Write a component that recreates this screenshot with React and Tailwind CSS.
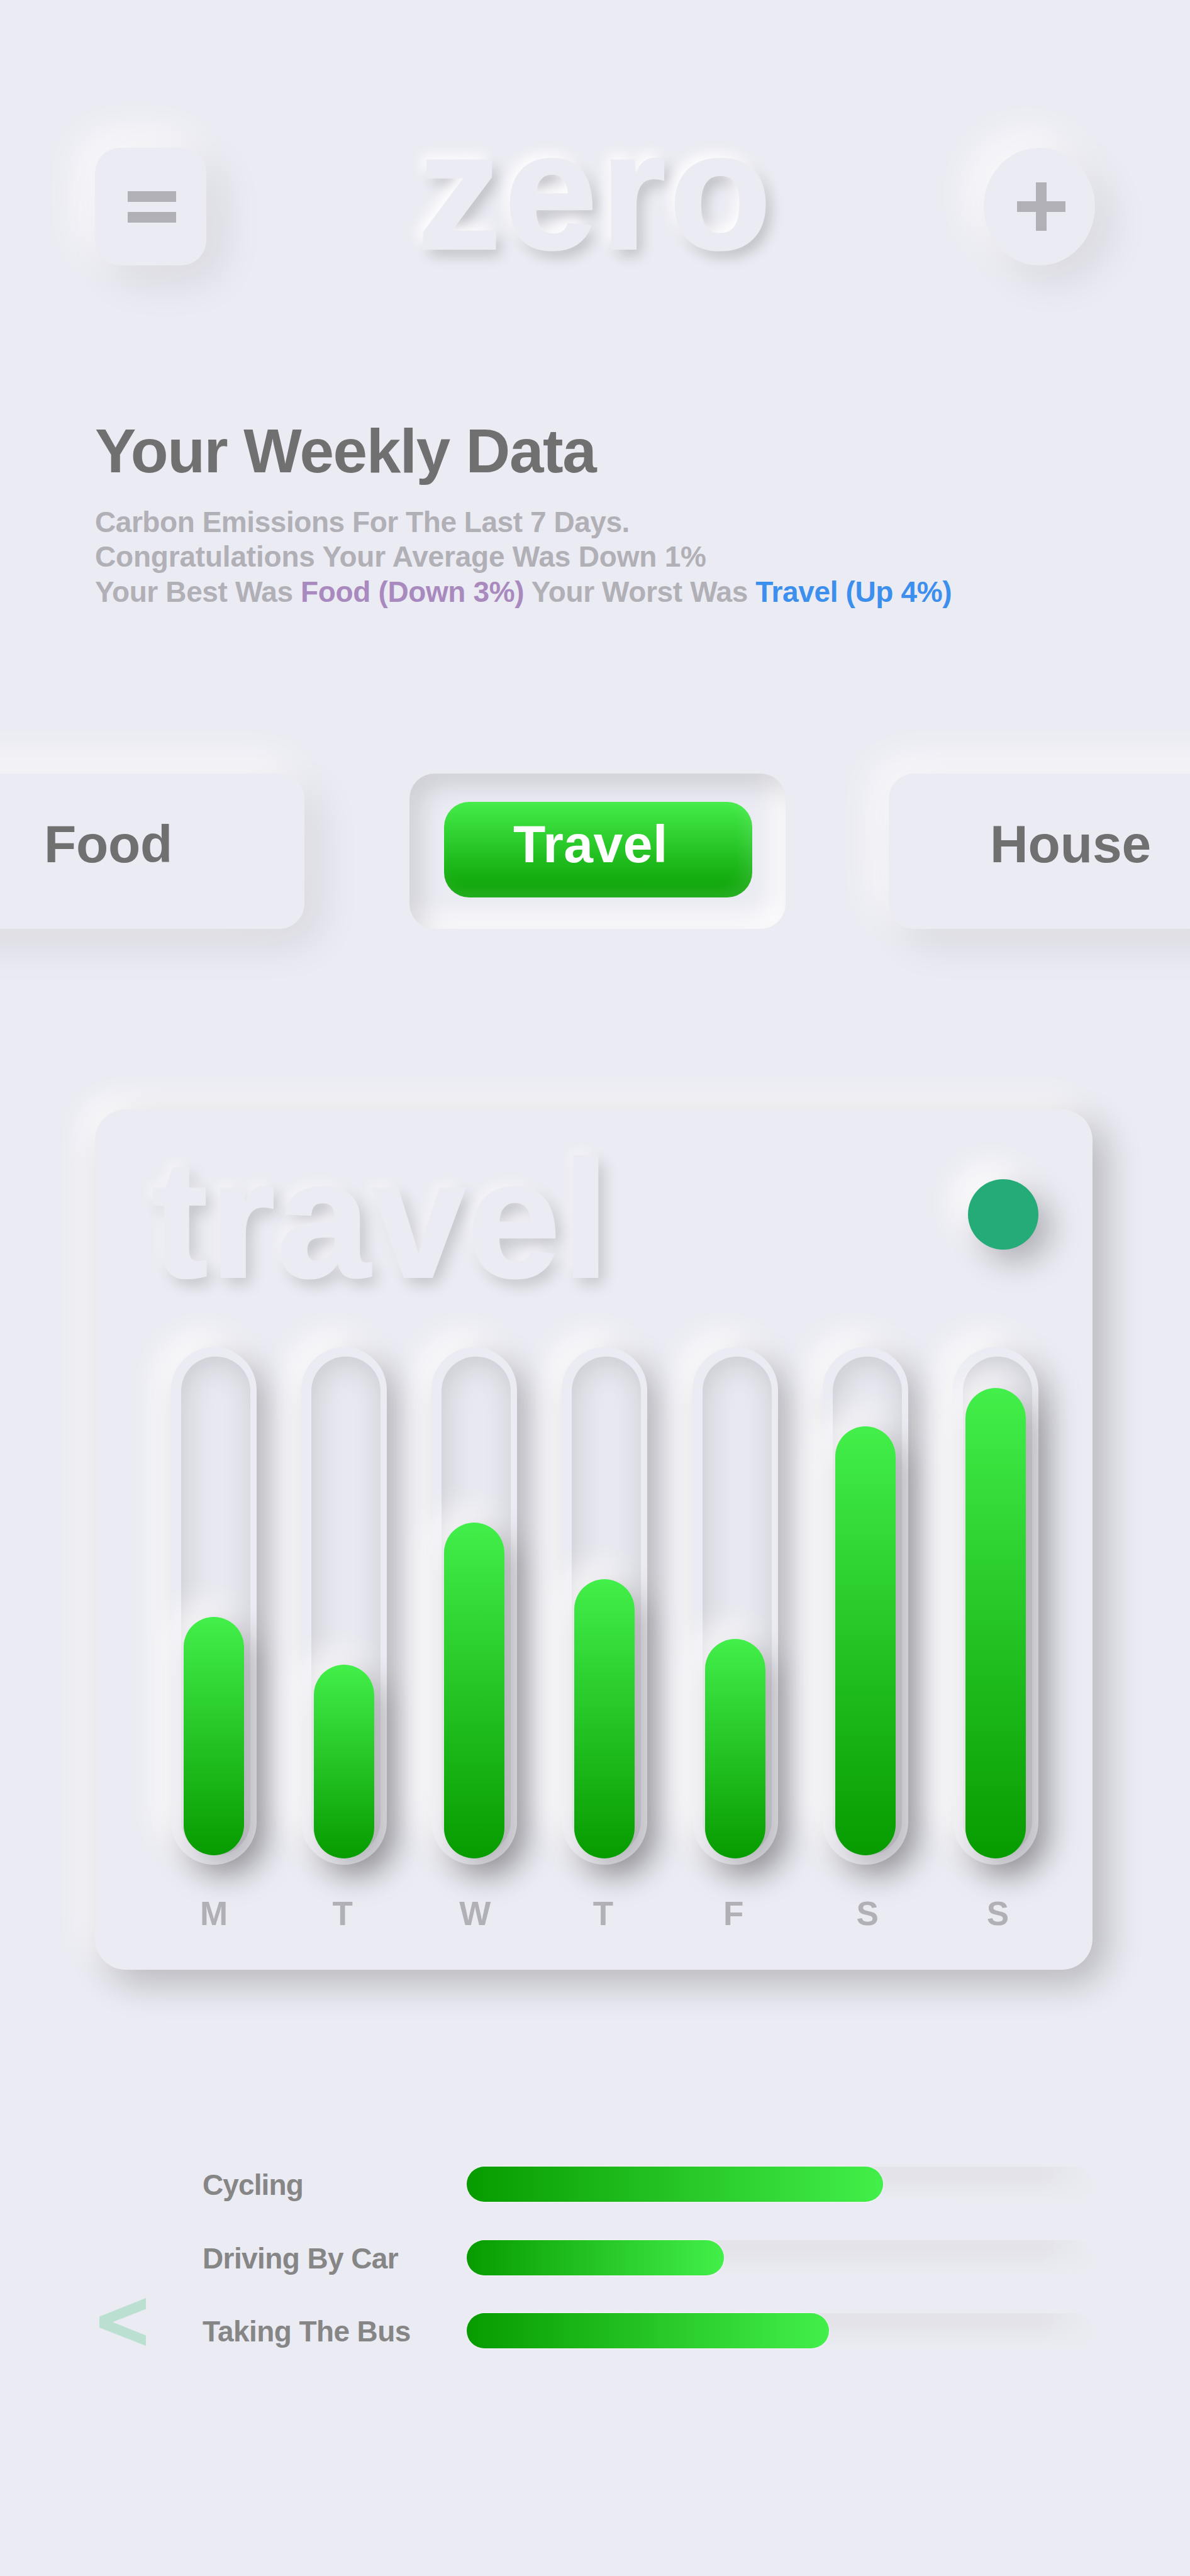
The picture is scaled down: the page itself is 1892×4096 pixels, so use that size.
import React from "react";

const days = [
  { label: "M", height: "h-[379px]", lift: "mb-0", shift: "pl-0" },
  { label: "T", height: "h-[308px]", lift: "-mb-[5px]", shift: "pr-[5px]" },
  { label: "W", height: "h-[534px]", lift: "-mb-[5px]", shift: "pl-[2px]" },
  { label: "T", height: "h-[444px]", lift: "-mb-[5px]", shift: "pr-[5px]" },
  { label: "F", height: "h-[349px]", lift: "-mb-[5px]", shift: "pr-[5px]" },
  { label: "S", height: "h-[682px]", lift: "mb-0", shift: "pl-[7px]" },
  { label: "S", height: "h-[748px]", lift: "-mb-[5px]", shift: "pl-[7px]" },
];

const modes = [
  { label: "Cycling", width: "w-[662px]", tracking: "tracking-[-0.89px]" },
  { label: "Driving By Car", width: "w-[409px]", tracking: "tracking-[-0.6px]" },
  { label: "Taking The Bus", width: "w-[576px]", tracking: "tracking-[-0.6px]" },
];

function Header() {
  return (
    <header className="flex h-[187px] items-start px-[151px]">
      <button
        aria-label="Menu"
        className="flex h-[187px] w-[177px] shrink-0 flex-col items-center gap-[16px] rounded-[40px] bg-[#ebebf3] pt-[69px] pl-[4px] shadow-[24px_24px_68px_rgba(0,0,0,0.09),-20px_-20px_64px_rgba(255,255,255,0.85)]"
      >
        <span className="h-[17px] w-[77px] bg-[#b1b0b6]" />
        <span className="h-[17px] w-[77px] bg-[#b1b0b6]" />
      </button>
      <h1 className="-mt-[65px] ml-[336px] text-[264px] leading-[268px] font-bold tracking-[6.3px] text-[#ebebf3] [-webkit-text-stroke:4px_#ebebf3] [text-shadow:-8px_-9px_20px_rgba(255,255,255,1),9px_11px_22px_rgba(0,0,0,0.2)]">
        zero
      </h1>
      <button
        aria-label="Add"
        className="ml-auto grid h-[187px] w-[177px] shrink-0 place-items-center rounded-[50%] bg-[#ebebf3] shadow-[24px_24px_68px_rgba(0,0,0,0.09),-20px_-20px_64px_rgba(255,255,255,0.85)]"
      >
        <svg className="ml-[5px] h-[77px] w-[77px]" viewBox="0 0 77 77" fill="#b1b0b6">
          <rect x="0" y="30" width="77" height="17" />
          <rect x="30" y="0" width="17" height="77" />
        </svg>
      </button>
    </header>
  );
}

function Summary() {
  return (
    <section className="mt-[246px] pl-[151px]">
      <h2 className="text-[98px] leading-[99px] font-bold tracking-[-1.4px] text-[#707070]">Your Weekly Data</h2>
      <div className="mt-[36px] text-[46px] leading-[55.4px] font-bold whitespace-nowrap text-[#b1b0b6]">
        <p className="tracking-[-0.45px]">Carbon Emissions For The Last 7 Days.</p>
        <p className="tracking-[-0.2px]">Congratulations Your Average Was Down 1%</p>
        <p className="tracking-[-0.37px]">
          Your Best Was <span className="text-[#a98abf]">Food (Down 3%)</span> Your Worst Was{" "}
          <span className="text-[#3c8fec]">Travel (Up 4%)</span>
        </p>
      </div>
    </section>
  );
}

function Categories() {
  return (
    <nav className="mt-[261px] -ml-[116px] flex h-[247px] w-[2124px] text-[84px] leading-[84px] font-bold">
      <div className="h-[247px] w-[600px] shrink-0 rounded-[40px] bg-[#ebebf3] pt-[70px] pl-[186px] tracking-[-0.28px] text-[#707070] shadow-[24px_24px_68px_rgba(0,0,0,0.09),-20px_-20px_64px_rgba(255,255,255,0.8)]">
        Food
      </div>
      <div className="ml-[167px] h-[247px] w-[598px] shrink-0 rounded-[40px] bg-[#ebebf3] pt-[45px] pl-[55px] shadow-[inset_16px_18px_40px_rgba(0,0,0,0.13),inset_-18px_-18px_36px_rgba(255,255,255,0.95)]">
        <div className="h-[152px] w-[490px] rounded-[40px] bg-[linear-gradient(to_bottom,#44ec49,#10a70b_88%,#10a70b)] pt-[25px] pl-[110px] tracking-[0.5px] text-white shadow-[inset_-10px_-10px_24px_rgba(255,255,255,0.11)]">
          Travel
        </div>
      </div>
      <div className="ml-[164px] h-[247px] w-[595px] shrink-0 rounded-[40px] bg-[#ebebf3] pt-[70px] pl-[161px] tracking-[-0.1px] text-[#707070] shadow-[24px_24px_68px_rgba(0,0,0,0.09),-20px_-20px_64px_rgba(255,255,255,0.8)]">
        House
      </div>
    </nav>
  );
}

function DayBar({ day }) {
  return (
    <div className="h-[823px] w-[136px] rounded-full bg-[#ebebf3] pt-[15px] pr-[10px] pb-[15px] pl-[16px] shadow-[18px_18px_50px_rgba(0,0,0,0.25),-18px_-18px_50px_rgba(255,255,255,1)]">
      <div className="flex h-[793px] w-[110px] items-end rounded-full bg-[#e8e8f0] pl-[4px] shadow-[inset_4px_6px_50px_rgba(0,0,0,0.14)]">
        <div
          className={`w-[96px] rounded-full bg-[linear-gradient(to_bottom,#43ef4a,#079b00)] shadow-[18px_18px_50px_rgba(0,0,0,0.26),-18px_-18px_50px_rgba(255,255,255,0.9)] ${day.height} ${day.lift}`}
        />
      </div>
    </div>
  );
}

function TravelPanel() {
  return (
    <section className="mt-[287px] ml-[151px] h-[1368px] w-[1586px] rounded-[49px] bg-[#ebebf3] pt-[41px] pr-[86px] pl-[91px] shadow-[20px_20px_58px_rgba(0,0,0,0.24),-16px_-16px_46px_rgba(255,255,255,0.95)]">
      <div className="flex h-[268px] justify-between">
        <h2 className="text-[264px] leading-[268px] font-bold tracking-[4.3px] text-[#ebebf3] [-webkit-text-stroke:4px_#ebebf3] [text-shadow:-7px_-8px_18px_rgba(255,255,255,0.5),9px_11px_24px_rgba(0,0,0,0.18)]">
          travel
        </h2>
        <span className="mt-[70px] h-[112px] w-[112px] rounded-full bg-[#25ab77] shadow-[20px_20px_50px_rgba(0,0,0,0.26),-20px_-20px_50px_rgba(255,255,255,1)]" />
      </div>
      <div className="mt-[69px] ml-[30px] flex justify-between">
        {days.map((day, i) => (
          <div key={i} className="flex w-[136px] flex-col items-center">
            <DayBar day={day} />
            <span className={`relative mt-[51px] text-[53px] leading-[53px] font-bold text-[#b1b0b6] ${day.shift}`}>
              {day.label}
            </span>
          </div>
        ))}
      </div>
    </section>
  );
}

function Breakdown() {
  return (
    <section className="mt-[313px] flex h-[289px] items-end pl-[158px]">
      <button aria-label="Previous" className="mb-[4px] h-[76px] w-[74px]">
        <svg className="h-[76px] w-[74px]" viewBox="0 0 74 76" fill="#bbe0d1">
          <path d="M74 0V17.5L21 38.3L74 59.5V76L0 47V29.5Z" />
        </svg>
      </button>
      <div className="ml-[90px] flex h-[289px] w-[1415px] flex-col justify-between">
        {modes.map((mode) => (
          <div key={mode.label} className="flex h-[56px] items-center">
            <span
              className={`w-[420px] pt-[2px] text-[46px] leading-[46px] font-bold whitespace-nowrap text-[#868686] ${mode.tracking}`}
            >
              {mode.label}
            </span>
            <div className="relative h-[56px] w-[995px] rounded-[28px]">
              <div className="absolute inset-0 rounded-[28px] bg-[linear-gradient(to_bottom,#e3e3e9,#e3e3e9_25%,#ebebf3)] [mask-image:linear-gradient(to_left,transparent,black_80px)]" />
              <div
                className={`relative h-[56px] rounded-full bg-[linear-gradient(to_right,#079b00,#43ef4a)] shadow-[0_0_3px_rgba(255,255,255,0.9)] ${mode.width}`}
              />
            </div>
          </div>
        ))}
      </div>
    </section>
  );
}

export default function App() {
  return (
    <main className="h-[4096px] w-[1892px] overflow-hidden bg-[#ebebf3] pt-[235px] font-['Liberation_Sans',Arial,sans-serif]">
      <Header />
      <Summary />
      <Categories />
      <TravelPanel />
      <Breakdown />
    </main>
  );
}
